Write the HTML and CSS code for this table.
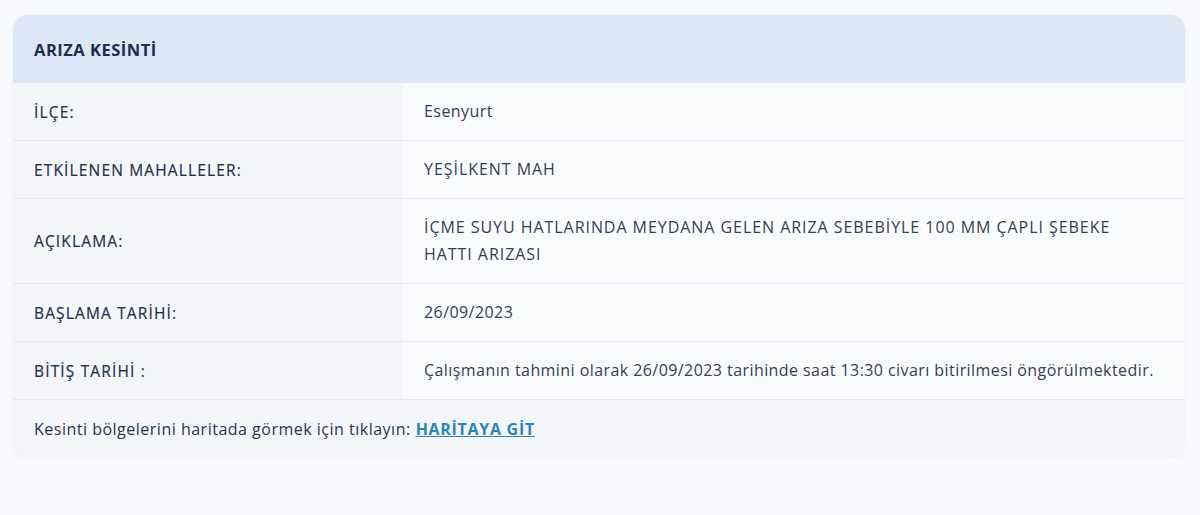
FILE: index.html
```html
<!DOCTYPE html>
<html lang="tr">
<head>
<meta charset="utf-8">
<link rel="stylesheet" href="styles.css">
</head>
<body>
<div class="card">
  <div class="card-head">ARIZA KESİNTİ</div>
  <div class="row">
    <div class="label">İLÇE:</div>
    <div class="value">Esenyurt</div>
  </div>
  <div class="row">
    <div class="label">ETKİLENEN MAHALLELER:</div>
    <div class="value caps">YEŞİLKENT MAH</div>
  </div>
  <div class="row tall">
    <div class="label">AÇIKLAMA:</div>
    <div class="value caps">İÇME SUYU HATLARINDA MEYDANA GELEN ARIZA SEBEBİYLE 100 MM ÇAPLI ŞEBEKE<br>HATTI ARIZASI</div>
  </div>
  <div class="row">
    <div class="label">BAŞLAMA TARİHİ:</div>
    <div class="value">26/09/2023</div>
  </div>
  <div class="row">
    <div class="label">BİTİŞ TARİHİ :</div>
    <div class="value">Çalışmanın tahmini olarak 26/09/2023 tarihinde saat 13:30 civarı bitirilmesi öngörülmektedir.</div>
  </div>
  <div class="card-foot">Kesinti bölgelerini haritada görmek için tıklayın: <a class="map-link" href="#">HARİTAYA GİT</a></div>
</div>
</body>
</html>
```
FILE: styles.css
```css
html, body {
  margin: 0;
  padding: 0;
  background: #f9fafd;
}
body {
  padding: 15px 15px 0 13px;
  font-family: "Open Sans", "Noto Sans", sans-serif;
  font-size: 16px;
  color: #343c52;
}
.card {
  width: 1172px;
  border-radius: 15px;
  overflow: hidden;
  background: #f4f6fa;
  box-shadow: 0 1px 4px rgba(40, 60, 110, 0.06);
}
.card-head {
  height: 68px;
  display: flex;
  align-items: center;
  padding-left: 21px;
  background: #dee7f6;
  font-weight: 700;
  font-size: 16.5px;
  letter-spacing: 0.5px;
  color: #1f2d4e;
}
.row {
  display: flex;
  height: 58px;
  border-bottom: 1px solid #e6e9f0;
  box-sizing: border-box;
}
.row.tall {
  height: 85px;
}
.label {
  width: 390px;
  flex: none;
  display: flex;
  align-items: center;
  padding-left: 21px;
  box-sizing: border-box;
  font-size: 15.5px;
  font-weight: 400;
  letter-spacing: 1.15px;
  -webkit-text-stroke: 0.2px currentColor;
  color: #27314c;
}
.value {
  flex: 1;
  display: flex;
  align-items: center;
  padding-left: 21px;
  background: #fafbfd;
  line-height: 27px;
  letter-spacing: 0.43px;
  color: #363e52;
}
.value.caps {
  letter-spacing: 0.95px;
}
.card-foot {
  height: 58px;
  display: flex;
  align-items: center;
  padding-left: 21px;
  letter-spacing: 0.5px;
  color: #2b3550;
}
.map-link {
  margin-left: 5px;
  color: #2c84b8;
  font-weight: 700;
  letter-spacing: 0.7px;
  text-decoration: underline;
}
```
